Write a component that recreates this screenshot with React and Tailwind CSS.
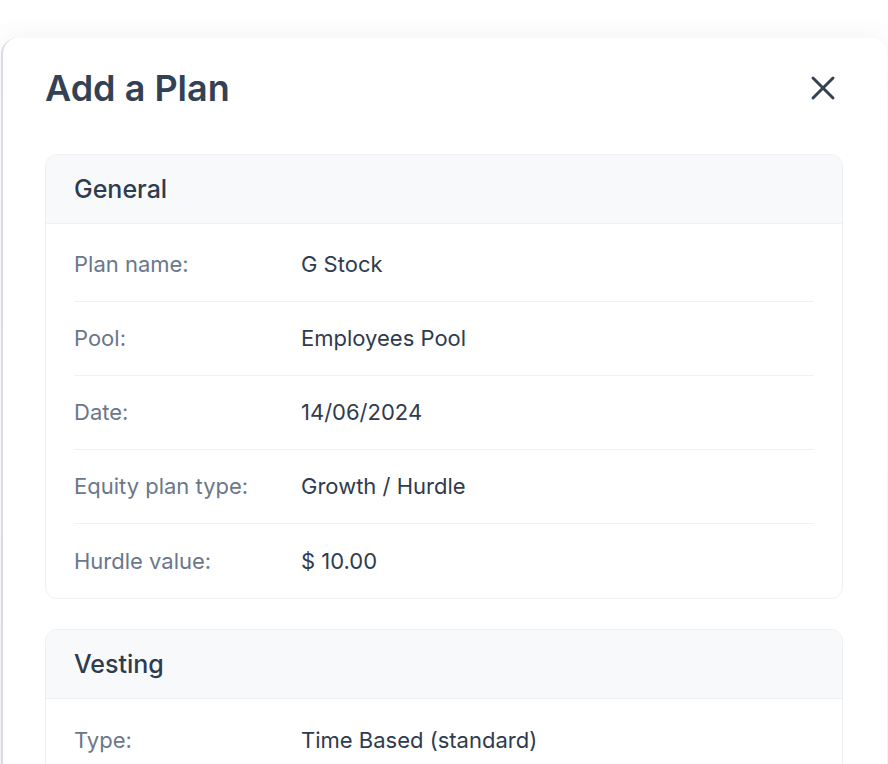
import React from 'react';
import { X } from 'lucide-react';

const general = [
    { label: 'Plan name:', value: 'G Stock' },
    { label: 'Pool:', value: 'Employees Pool' },
    { label: 'Date:', value: '14/06/2024' },
    { label: 'Equity plan type:', value: 'Growth / Hurdle' },
    { label: 'Hurdle value:', value: '$ 10.00' },
];

const vesting = [
    { label: 'Type:', value: 'Time Based (standard)' },
];

const Section = ({ title, rows }) => (
    <div className="rounded-xl border border-[#eef0f4] bg-white overflow-hidden">
        <div className="h-[69px] flex items-center px-[28px] bg-[#f8f9fb] border-b border-[#eef0f4]">
            <h2 className="text-[25px] font-medium text-[#2f3b4e] leading-none">{title}</h2>
        </div>
        <div className="px-[28px] pt-[4px]">
            {rows.map((row, i) => (
                <div
                    key={row.label}
                    className={
                        'h-[74px] flex items-center text-[22px] ' +
                        (i < rows.length - 1 ? 'border-b border-[#eef0f4]' : '')
                    }
                >
                    <span className="w-[227px] text-[#6b778a]">{row.label}</span>
                    <span className="text-[#2f3b4e]">{row.value}</span>
                </div>
            ))}
        </div>
    </div>
);

export default function App() {
    return (
        <div
            className="w-[888px] h-[764px] overflow-hidden bg-gradient-to-b from-white to-[#f7f7f8]"
            style={{ fontFamily: 'Inter, "Noto Sans", sans-serif' }}
        >
            <div className="ml-[1px] mt-[38px] w-[886px] min-h-[760px] bg-white rounded-t-2xl border-l-2 border-[#d9dce8] shadow-[0_-6px_24px_rgba(0,0,0,0.04)] pl-[42px] pr-[44px]">
                <div className="pt-[30px] flex items-center justify-between">
                    <h1 className="text-[36px] leading-[40px] font-semibold text-[#334155]">Add a Plan</h1>
                    <button className="mr-[0px] text-[#334155]" aria-label="Close">
                        <X className="w-[40px] h-[40px]" strokeWidth={1.8} />
                    </button>
                </div>
                <div className="mt-[46px] flex flex-col gap-[30px]">
                    <Section title="General" rows={general} />
                    <Section title="Vesting" rows={vesting} />
                </div>
            </div>
        </div>
    );
}
